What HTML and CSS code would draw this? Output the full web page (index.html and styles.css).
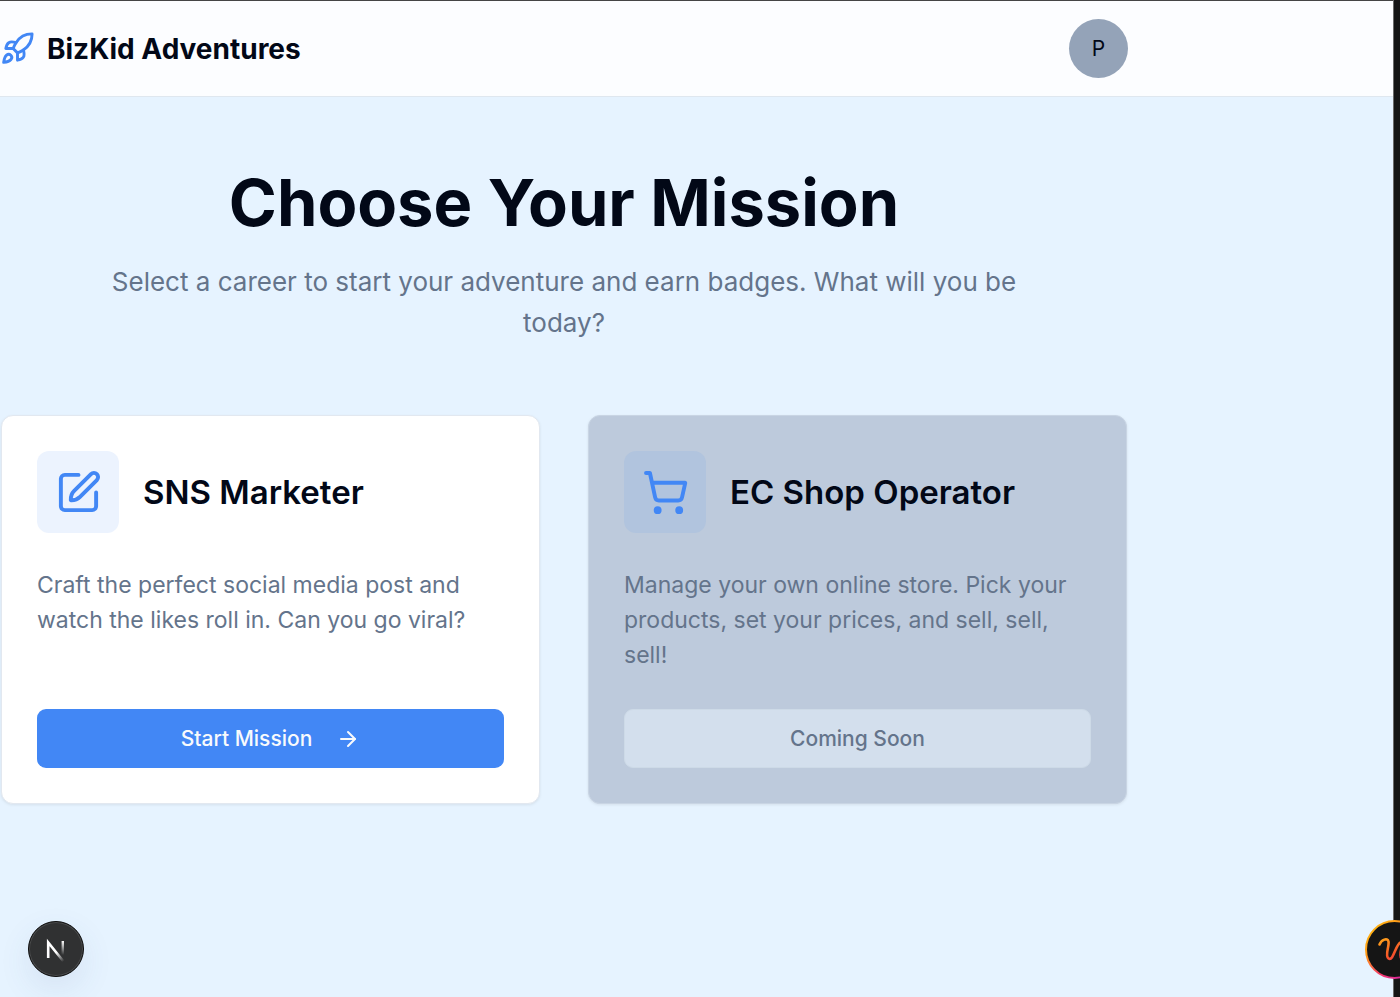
FILE: index.html
```html
<!DOCTYPE html>
<html lang="en">
<head>
    <meta charset="UTF-8">
    <meta name="viewport" content="width=device-width, initial-scale=1.0">
    <title>BizKid Adventures</title>
    <link rel="stylesheet" href="styles.css">
</head>
<body>

    <header class="header">
        <div class="container header-inner">
            <a class="brand" href="#">
                <svg class="icon brand-icon" viewBox="0 0 24 24" aria-hidden="true">
                    <path d="M4.5 16.5c-1.5 1.26-2 5-2 5s3.74-.5 5-2c.71-.84.7-2.13-.09-2.91a2.18 2.18 0 0 0-2.91-.09z"/>
                    <path d="m12 15-3-3a22 22 0 0 1 2-3.95A12.88 12.88 0 0 1 22 2c0 2.72-.78 7.5-6 11a22.35 22.35 0 0 1-4 2z"/>
                    <path d="M9 12H4s.55-3.03 2-4c1.62-1.08 5 0 5 0"/>
                    <path d="M12 15v5s3.03-.55 4-2c1.08-1.62 0-5 0-5"/>
                </svg>
                <span>BizKid Adventures</span>
            </a>
            <button class="avatar" type="button">P</button>
        </div>
    </header>

    <main class="container main">
        <div class="intro">
            <h1>Choose Your Mission</h1>
            <p>Select a career to start your adventure and earn badges. What will you be today?</p>
        </div>

        <div class="missions">
            <section class="card">
                <div class="card-header">
                    <div class="card-icon">
                        <svg class="icon" viewBox="0 0 24 24" aria-hidden="true">
                            <path d="M12 3H5a2 2 0 0 0-2 2v14a2 2 0 0 0 2 2h14a2 2 0 0 0 2-2v-7"/>
                            <path d="M18.375 2.625a1 1 0 0 1 3 3l-8.6 8.6c-1.1 1.1-2.4 1.8-4.7 1.7-.1-2.3.6-3.6 1.7-4.7z"/>
                        </svg>
                    </div>
                    <h2>SNS Marketer</h2>
                </div>
                <p class="card-text">Craft the perfect social media post and watch the likes roll in. Can you go viral?</p>
                <button class="btn btn-primary" type="button">
                    Start Mission
                    <svg class="icon btn-icon" viewBox="0 0 24 24" aria-hidden="true">
                        <path d="M5 12h14"/>
                        <path d="m12 5 7 7-7 7"/>
                    </svg>
                </button>
            </section>

            <section class="card card-locked">
                <div class="card-header">
                    <div class="card-icon">
                        <svg class="icon" viewBox="0 0 24 24" aria-hidden="true">
                            <circle cx="8" cy="21" r="1"/>
                            <circle cx="19" cy="21" r="1"/>
                            <path d="M2.05 2.05h2l2.66 12.42a2 2 0 0 0 2 1.58h9.78a2 2 0 0 0 1.95-1.57l1.65-7.43H5.12"/>
                        </svg>
                    </div>
                    <h2>EC Shop Operator</h2>
                </div>
                <p class="card-text">Manage your own online store. Pick your products, set your prices, and sell, sell, sell!</p>
                <button class="btn btn-disabled" type="button" disabled>Coming Soon</button>
            </section>
        </div>
    </main>

    <button class="dev-badge" type="button" aria-label="Dev tools">
        <svg viewBox="0 0 54 54" aria-hidden="true">
            <defs>
                <linearGradient id="fadeDiagonal" gradientUnits="userSpaceOnUse" x1="28" y1="30" x2="35" y2="39">
                    <stop offset="0" stop-color="#fff"/>
                    <stop offset="1" stop-color="#fff" stop-opacity="0"/>
                </linearGradient>
                <linearGradient id="fadeStem" gradientUnits="userSpaceOnUse" x1="34" y1="19" x2="34" y2="33">
                    <stop offset="0" stop-color="#fff"/>
                    <stop offset="1" stop-color="#fff" stop-opacity="0"/>
                </linearGradient>
            </defs>
            <path d="M19.2 36V20.5L34.5 39.5" fill="none" stroke="url(#fadeDiagonal)" stroke-width="2.6"/>
            <path d="M33.8 19v15" fill="none" stroke="url(#fadeStem)" stroke-width="2.4"/>
        </svg>
    </button>

    <div class="edge">
        <button class="assistant" type="button" aria-label="Assistant">
            <svg viewBox="0 0 59 59" aria-hidden="true">
                <defs>
                    <linearGradient id="ring" x1="0" y1="0" x2="1" y2="1">
                        <stop offset="0" stop-color="#ffc20c"/>
                        <stop offset="0.3" stop-color="#ff9a1a"/>
                        <stop offset="0.6" stop-color="#f5376a"/>
                        <stop offset="1" stop-color="#c31ad0"/>
                    </linearGradient>
                    <linearGradient id="squiggle" x1="0" y1="0" x2="1" y2="1">
                        <stop offset="0" stop-color="#ffa51a"/>
                        <stop offset="0.6" stop-color="#f5502a"/>
                        <stop offset="1" stop-color="#f5376a"/>
                    </linearGradient>
                </defs>
                <circle cx="29.5" cy="29.5" r="28.5" fill="#151515" stroke="url(#ring)" stroke-width="2"/>
                <path d="M14.5 24.5c2-5 8-7 9-3 1 5-4 14 0 17 5 3 7-14 12-16 5-2-3 12 1 16 3 2 7-3 10-8" fill="none" stroke="url(#squiggle)" stroke-width="2.6" stroke-linecap="round"/>
            </svg>
        </button>
    </div>

</body>
</html>
```

FILE: styles.css
```css
* {
    box-sizing: border-box;
}

body {
    margin: 0;
    min-height: 100vh;
    background-color: #e6f3ff;
    border-top: 1px solid #454545;
    color: #020817;
    font-family: Inter, sans-serif;
    overflow-x: hidden;
}

h1,
h2,
p {
    margin: 0;
}

button {
    font-family: inherit;
    border: none;
    padding: 0;
    cursor: pointer;
}

.container {
    max-width: 1128px;
}

.icon {
    fill: none;
    stroke: #4287f5;
    stroke-width: 2;
    stroke-linecap: round;
    stroke-linejoin: round;
}

.header {
    background-color: #fcfdff;
    border-bottom: 1px solid #dfe7ef;
}

.header-inner {
    display: flex;
    justify-content: space-between;
    align-items: center;
    padding: 18px 0;
}

.brand {
    display: flex;
    align-items: center;
    gap: 12px;
    color: inherit;
    text-decoration: none;
    font-size: 28px;
    font-weight: 700;
}

.brand-icon {
    width: 35px;
    height: 35px;
}

.avatar {
    width: 59px;
    height: 59px;
    border-radius: 50%;
    background-color: #94a3b8;
    color: #020817;
    font-size: 21px;
    font-weight: 400;
}

.main {
    padding: 70px 1px;
}

.intro {
    max-width: 986px;
    margin: 0 auto 72px;
    text-align: center;
}

.intro h1 {
    margin-bottom: 22px;
    font-size: 65px;
    font-weight: 700;
    line-height: 72px;
}

.intro p {
    color: #64748b;
    font-size: 26px;
    line-height: 41px;
}

.missions {
    display: grid;
    grid-template-columns: 1fr 1fr;
    gap: 48px;
}

.card {
    display: flex;
    flex-direction: column;
    padding: 35px;
    background-color: #fff;
    border: 1px solid #e2e8f0;
    border-radius: 12px;
    box-shadow: 0 1px 3px rgba(0, 0, 0, 0.08);
}

.card-header {
    display: flex;
    align-items: center;
    gap: 24px;
    margin-bottom: 35px;
}

.card-icon {
    display: flex;
    justify-content: center;
    align-items: center;
    width: 82px;
    height: 82px;
    background-color: #ecf3fe;
    border-radius: 12px;
}

.card-icon .icon {
    width: 47px;
    height: 47px;
}

.card h2 {
    font-size: 33px;
    font-weight: 600;
    line-height: 36px;
}

.card-text {
    flex: 1;
    margin-bottom: 36px;
    color: #64748b;
    font-size: 23px;
    line-height: 35px;
}

.btn {
    display: flex;
    justify-content: center;
    align-items: center;
    gap: 24px;
    height: 59px;
    border-radius: 9px;
    font-size: 21px;
    font-weight: 500;
}

.btn-primary {
    background-color: #4287f5;
    color: #f8fafc;
}

.btn-icon {
    width: 24px;
    height: 24px;
    stroke: #f8fafc;
}

.card-locked {
    background-color: #bdcadc;
    border-color: #c9d5e4;
}

.card-locked .card-icon {
    background-color: #b1c4de;
}

.btn-disabled {
    background-color: #d3dfed;
    border: 1px solid #cddae7;
    color: #64748b;
    cursor: default;
}

/* floating buttons */
.dev-badge {
    position: fixed;
    left: 28px;
    bottom: 20px;
    width: 56px;
    height: 56px;
    border-radius: 50%;
    background-color: #303132;
    border: 1px solid #0c0c0c;
    box-shadow: inset 0 0 0 1px #4b4c4d, 0 12px 32px rgba(60, 90, 140, 0.1);
}

.dev-badge svg {
    display: block;
}

.edge {
    position: fixed;
    top: 0;
    right: 0;
    bottom: 0;
    width: 7px;
    background-color: #151515;
    border-left: 1px solid #6b6b6b;
}

.assistant {
    position: absolute;
    right: -24px;
    bottom: 18px;
    width: 59px;
    height: 59px;
    background: none;
}

.assistant svg {
    display: block;
}
```
